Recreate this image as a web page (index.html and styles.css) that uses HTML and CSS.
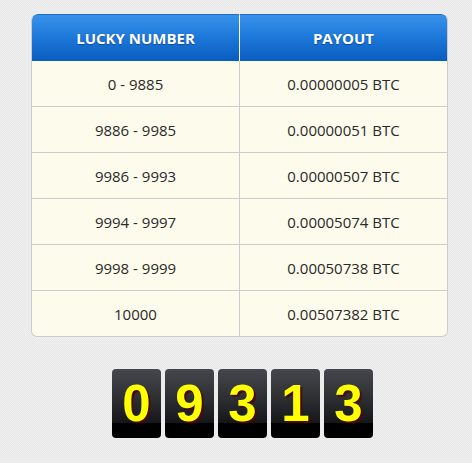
FILE: index.html
```html
<!doctype html>
<html lang="en">
<head>
  <meta charset="UTF-8" />
  <meta name="viewport" content="width=device-width, initial-scale=1" />
  <title>Lucky Number</title>
  <link rel="stylesheet" href="styles.css">
</head>
<body>
  <div class="wrap">
    <table class="payout">
      <thead>
        <tr>
          <th>LUCKY NUMBER</th>
          <th>PAYOUT</th>
        </tr>
      </thead>
      <tbody>
        <tr><td>0 - 9885</td><td>0.00000005 BTC</td></tr>
        <tr><td>9886 - 9985</td><td>0.00000051 BTC</td></tr>
        <tr><td>9986 - 9993</td><td>0.00000507 BTC</td></tr>
        <tr><td>9994 - 9997</td><td>0.00005074 BTC</td></tr>
        <tr><td>9998 - 9999</td><td>0.00050738 BTC</td></tr>
        <tr><td>10000</td><td>0.00507382 BTC</td></tr>
      </tbody>
    </table>

    <div class="digits">
      <span class="digit">0</span>
      <span class="digit">9</span>
      <span class="digit">3</span>
      <span class="digit">1</span>
      <span class="digit">3</span>
    </div>
  </div>
</body>
</html>
```

FILE: styles.css
```css
html, body {
  margin: 0;
  padding: 0;
}
body {
  background-color: #ececec;
  background-image: repeating-conic-gradient(#e9e9e9 0 25%, #efefef 0 50%);
  background-size: 2px 2px;
  font-family: 'Open Sans', 'Liberation Sans', sans-serif;
  color: #333;
  height: 463px;
}
.wrap {
  width: 417px;
  padding: 14px 0 0 31px;
}
.payout {
  width: 417px;
  border-collapse: separate;
  border-spacing: 0;
  border: 1px solid #ccc;
  border-top: none;
  border-radius: 6px;
  background: #fdfbec;
  table-layout: fixed;
  overflow: hidden;
}
.payout th {
  height: 46px;
  padding: 0;
  font-size: 15px;
  font-weight: 700;
  color: #fff;
  text-shadow: 0 1px 1px rgba(0, 40, 100, 0.5);
  background: linear-gradient(to bottom, #3892ec 0%, #1a74d6 55%, #0a5cbf 100%);
  border-top: 1px solid #1e6fc9;
}
.payout th:first-child {
  width: 207px;
  border-top-left-radius: 6px;
}
.payout th:last-child {
  border-top-right-radius: 6px;
  border-left: 1px solid #fff;
}
.payout td {
  height: 45px;
  padding: 0;
  text-align: center;
  font-size: 15px;
  color: #2a2a2a;
  border-top: 1px solid #ccc;
}
.payout tbody tr:first-child td {
  border-top: none;
}
.payout td + td {
  border-left: 1px solid #ccc;
}
.digits {
  display: flex;
  justify-content: center;
  gap: 4px;
  margin-top: 32px;
  padding-left: 6px;
}
.digit {
  width: 49px;
  height: 69px;
  border-radius: 4px;
  background: linear-gradient(to bottom, #46474c 0%, #2c2d31 45%, #151618 78%, #000 78%, #000 100%);
  display: flex;
  align-items: center;
  justify-content: center;
  font-family: 'Liberation Sans', Arial, sans-serif;
  font-weight: 700;
  font-size: 51px;
  color: #ffff00;
  text-shadow: 2px 2px 0 #4a0808;
}
```
